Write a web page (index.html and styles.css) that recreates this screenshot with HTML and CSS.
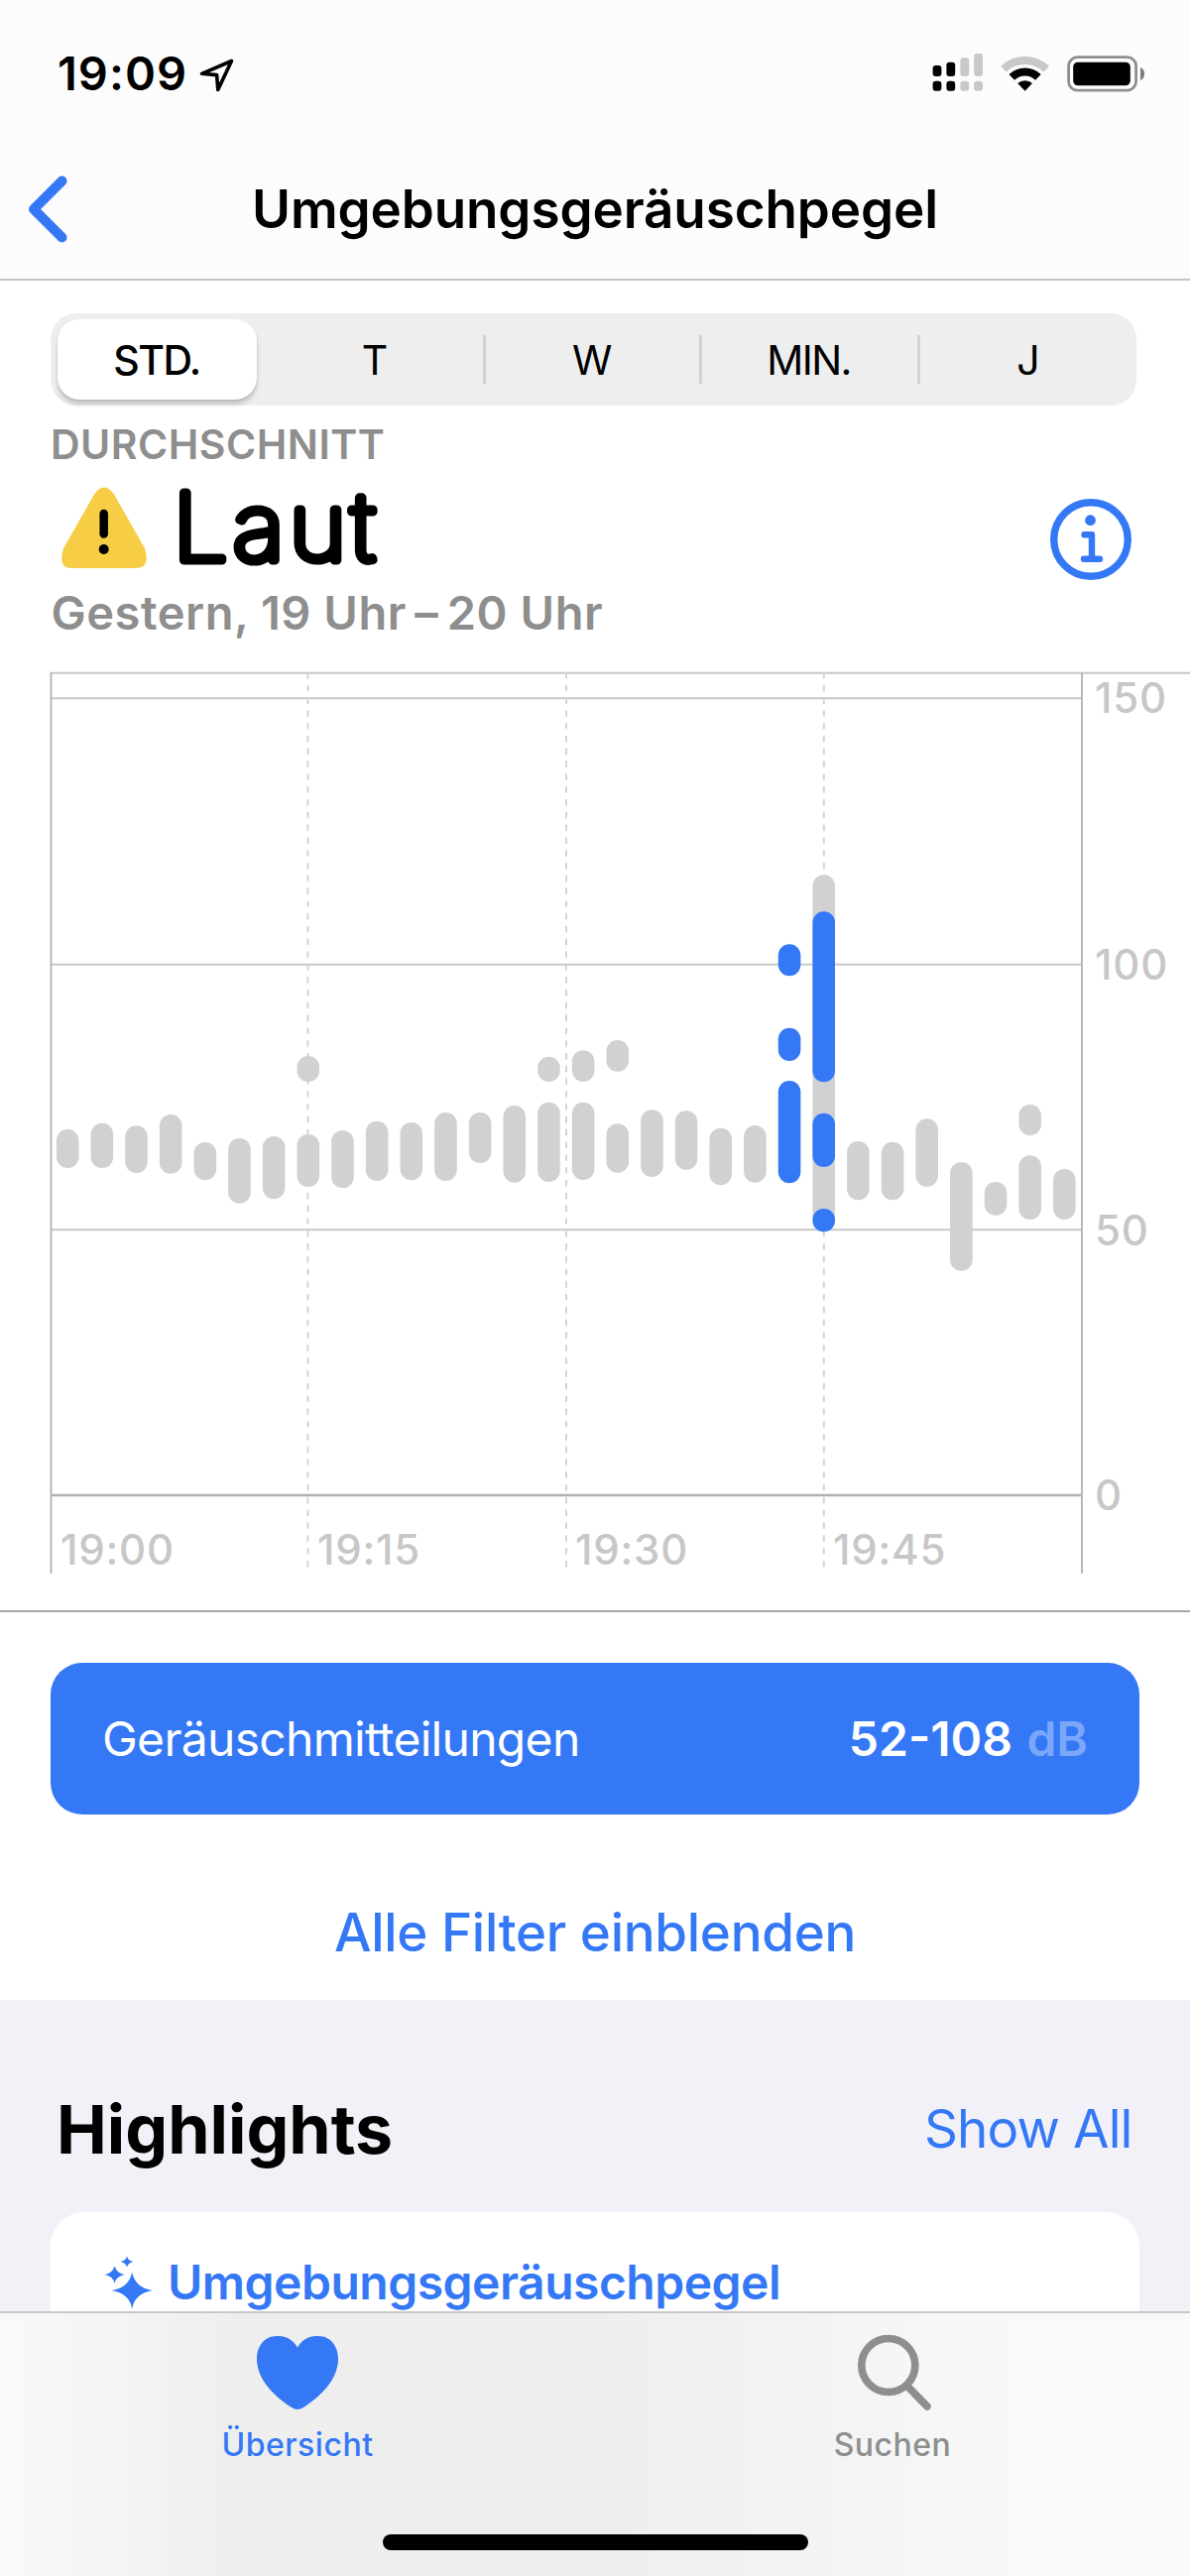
FILE: index.html
```html
<!DOCTYPE html>
<html lang="de">
<head>
<meta charset="utf-8">
<title>Umgebungsgeräuschpegel</title>
<link rel="stylesheet" href="styles.css">
</head>
<body>
<div class="screen">
  <header class="header">
    <div class="status">
      <div class="status-left">
        <span class="time">19:09</span>
        <svg class="location" width="38" height="38" viewBox="0 0 38 38"><path d="M33.5 4.5 3.5 17.3 18.6 18.6 19.8 33.5Z"/></svg>
      </div>
      <svg class="status-icons" width="220" height="44" viewBox="938 51 220 44">
        <g><rect x="940.6" y="65" width="8.8" height="11" rx="3"/><rect x="954.4" y="61.7" width="8.8" height="14.3" rx="3"/><rect x="940.6" y="80.7" width="8.8" height="10" rx="3"/><rect x="954.4" y="80.7" width="8.8" height="10" rx="3"/></g>
        <g class="dim"><rect x="968.4" y="57.3" width="8.8" height="18.7" rx="3"/><rect x="982.2" y="53" width="8.8" height="23" rx="3"/><rect x="968.4" y="80.7" width="8.8" height="10" rx="3"/><rect x="982.2" y="80.7" width="8.8" height="10" rx="3"/></g>
        <path class="arc dim-line" d="M1012 68.6A31.2 31.2 0 0 1 1055.2 68.6"/>
        <path class="arc" d="M1020.3 76.9A18.9 18.9 0 0 1 1046.9 76.9"/>
        <path d="M1033.6 90.7 1026.2 83.1A10.7 10.7 0 0 1 1041 83.1Z"/>
        <rect class="battery" x="1077.6" y="56.6" width="68" height="33.6" rx="9"/>
        <rect x="1082.2" y="61.7" width="57.6" height="23.6" rx="4.8"/>
        <path class="nub" d="M1150 67c5.4 2 5.400 11 0 13Z"/>
      </svg>
    </div>
    <div class="nav">
      <svg class="back" width="46" height="76" viewBox="0 0 46 76"><path d="M38.500 9.500 10 38 38.500 66.500"/></svg>
      <h1 class="title">Umgebungsgeräuschpegel</h1>
    </div>
  </header>

  <main class="content">
    <div class="segments">
      <div class="segment selected">STD.</div>
      <div class="segment">T</div>
      <div class="segment divided">W</div>
      <div class="segment divided">MIN.</div>
      <div class="segment divided">J</div>
    </div>

    <section class="summary">
      <div class="caption">DURCHSCHNITT</div>
      <div class="level">
        <svg class="warning" width="90" height="84" viewBox="0 0 90 84"><path class="tri" d="M35 8.500Q45 -5.500 55 8.500L86 63Q92 83 77 83H12Q-2 83 4 63Z"/><path class="mark" d="M44.700 28V48.500"/><circle cx="44.700" cy="64" r="5"/></svg>
        <svg class="level-name" width="230" height="116" viewBox="0 0 230 116"><text transform="translate(-5.500 92) scale(1.050 1)">Laut</text></svg>
        <svg class="info" width="82" height="82" viewBox="0 0 82 82"><circle class="ring" cx="41" cy="41" r="37.300"/><circle cx="40.500" cy="21.700" r="5.400"/><path class="stem" d="M34.500 36.200H42V60.500M34 60.700H50"/></svg>
      </div>
      <div class="range">Gestern, 19 Uhr&#8201;–&#8201;20 Uhr</div>
    </section>

    <svg class="chart" width="1200" height="912" viewBox="0 677 1200 912">
      <path class="grid" d="M51 678.700H1200M51 704.200H1091M51 972.700H1091M51 1240.300H1091"/>
      <path class="dash" d="M310.400 678V1583M571 678V1583M830.800 678V1583"/>
      <path class="zero" d="M51 1508H1091"/>
      <path class="side" d="M51.500 678V1587M1091 678V1587"/>
      <g id="bars"></g>
      <g class="axis">
        <text x="1104" y="719">150</text><text x="1104" y="987.500">100</text><text x="1104" y="1255.500">50</text><text x="1104" y="1523">0</text>
        <text x="61" y="1577.500">19:00</text><text x="320" y="1577.500">19:15</text><text x="580" y="1577.500">19:30</text><text x="840" y="1577.500">19:45</text>
      </g>
    </svg>

    <section class="filters">
      <div class="filter-card">
        <span class="filter-name">Geräuschmitteilungen</span>
        <span class="reading"><span>52-108</span><span class="unit">dB</span></span>
      </div>
      <div class="all-filters">Alle Filter einblenden</div>
    </section>

    <section class="highlights">
      <div class="section-head"><h2>Highlights</h2><span class="show-all">Show All</span></div>
      <div class="card">
        <svg class="sparkles" width="54" height="60" viewBox="102 2272 54 60"><path d="M133.200 2291.500Q136 2307 153.700 2310 136 2313 133.200 2328.500 130.400 2313 112.700 2310 130.400 2307 133.200 2291.500ZM115.600 2285Q117.200 2292.500 125.600 2294 117.200 2295.500 115.600 2303 114 2295.500 105.600 2294 114 2292.500 115.600 2285ZM128 2275.500Q129.200 2280 134.500 2281 129.200 2282 128 2286.500 126.800 2282 121.500 2281 126.800 2280 128 2275.500Z"/></svg>
        <span>Umgebungsgeräuschpegel</span>
      </div>
    </section>
  </main>

  <footer class="tabbar">
    <div class="tabs">
      <div class="tab active">
        <svg width="84" height="80" viewBox="0 0 84 80"><path d="M42 14.500C48 4 57 3 63 3 76 3 83 14 83 26 83 49 62 66 48 75Q42 79 36 75C22 66 1 49 1 26 1 14 8 3 21 3 27 3 36 4 42 14.500Z"/></svg>
        <span>Übersicht</span>
      </div>
      <div class="tab">
        <svg width="84" height="80" viewBox="858 2353 84 80"><circle class="lens" cx="895.800" cy="2385.500" r="27"/><path class="lens" d="M914.500 2406 935 2427"/></svg>
        <span>Suchen</span>
      </div>
    </div>
    <div class="home"></div>
  </footer>
</div>
<script src="chart.js"></script>
</body>
</html>
```

FILE: styles.css
```css
* { box-sizing: border-box; }
body { margin: 0; background: #fff; font-family: Inter, "Liberation Sans", sans-serif; color: #000; }
h1, h2 { margin: 0; font: inherit; }
svg { display: block; flex: none; }
span { white-space: nowrap; }
.screen { width: 1200px; height: 2598px; display: flex; flex-direction: column; overflow: hidden; }

.header { height: 283px; background: #fcfcfc; border-bottom: 2px solid #c6c6c6; }
.status { height: 147px; padding: 0 42px 0 58px; display: flex; align-items: center; justify-content: space-between; }
.status-left { display: flex; align-items: center; gap: 11px; }
.time { font-size: 47px; font-weight: 600; line-height: 60px; letter-spacing: 1px; }
.location { margin-top: 4px; }
.location path { fill: none; stroke: #000; stroke-width: 3.6; stroke-linejoin: round; }
.dim { fill: #c8c8ca; }
.arc { fill: none; stroke: #000; stroke-width: 8; }
.arc.dim-line { stroke: #c8c8ca; }
.battery { fill: none; stroke: #8e8e8e; stroke-width: 2.8; }
.nub { fill: #7c7c7c; }
.nav { height: 128px; padding-left: 24px; display: grid; grid-template-columns: 46px 1fr 70px; align-items: center; }
.back path { fill: none; stroke: #3478f6; stroke-width: 10; stroke-linecap: round; stroke-linejoin: round; }
.title { text-align: center; font-size: 53px; font-weight: 600; line-height: 80px; letter-spacing: -.12px; }

.content { height: 2048px; overflow: hidden; display: flex; flex-direction: column; }
.segments { margin: 33px 54px 0 51px; height: 93px; flex: none; padding: 6px 0; border-radius: 26px; background: #eee; display: grid; grid-template-columns: 218px 217.5px 218px 220px 1fr; align-items: center; font-size: 41px; letter-spacing: -1.5px; }
.segment { height: 49px; padding-right: 1px; display: flex; align-items: center; justify-content: center; }
.segment.selected { height: 81px; margin: 0 10px 0 7px; border-radius: 22px; background: #fff; font-weight: 500; box-shadow: 0 5px 4px rgba(0,0,0,.17), 0 1px 3px rgba(0,0,0,.08); }
.divided { border-left: 3px solid #d2d2d2; }

.summary { padding: 14px 59px 0 51px; flex: none; color: #8e8e8e; }
.caption { font-size: 41px; font-weight: 600; line-height: 50px; letter-spacing: .5px; }
.level { height: 116px; display: flex; align-items: center; }
.warning { margin-left: 9px; margin-top: 2px; }
.tri { fill: #f6cd45; }
.mark { stroke: #000; stroke-width: 8.5; stroke-linecap: round; }
.level-name { margin-left: 30px; overflow: visible; }
.level-name text { font-size: 93.500px; font-weight: 100; letter-spacing: 5px; fill: #000; stroke: #000; stroke-width: 9px; stroke-linejoin: round; }
.info { margin-left: auto; margin-top: 26px; fill: #3478f6; }
.ring, .stem { fill: none; stroke: #3478f6; stroke-width: 7.4; }
.stem { stroke-width: 6.4; stroke-linecap: round; stroke-linejoin: round; }
.range { padding-left: .5px; font-size: 47px; font-weight: 600; line-height: 57px; letter-spacing: .55px; }

.chart { margin-top: 31px; }
.grid { stroke: #c8c8c8; stroke-width: 2; }
.dash { stroke: #d4d4d4; stroke-width: 2; stroke-dasharray: 6.4 6.4; }
.zero { stroke: #b0b0b0; stroke-width: 2.4; }
.side { stroke: #b8b8b8; stroke-width: 2; }
.bar { fill: #d1d1d3; }
.bar.alert { fill: #3478f6; }
.axis { fill: #c7c7c9; font-size: 42px; font-weight: 500; letter-spacing: .8px; }

.filters { margin-top: 35px; border-top: 2px solid #a8a8a8; padding: 51px 51px 0; flex: none; height: 393px; }
.filter-card { height: 153px; border-radius: 32px; padding: 0 52px 0 52px; background: #3478f6; color: #fff; display: flex; align-items: center; justify-content: space-between; font-size: 48px; }
.filter-name { letter-spacing: -.7px; }
.reading { display: flex; gap: 14.500px; font-weight: 600; }
.unit { color: #7aa7f9; }
.all-filters { padding-top: 51px; text-align: center; font-size: 53px; font-weight: 500; line-height: 136px; letter-spacing: -.3px; color: #3478f6; }

.highlights { flex: 1; background: #f2f1f7; padding: 45px 51px 0; }
.section-head { height: 169px; padding: 0 7.500px 0 6px; display: flex; align-items: center; justify-content: space-between; }
h2 { font-size: 68px; font-weight: 700; }
.show-all { font-size: 53px; letter-spacing: -.9px; color: #3478f6; }
.card { height: 141px; border-radius: 34px 34px 0 0; background: #fff; padding-left: 51px; display: flex; align-items: center; gap: 13px; font-size: 48px; font-weight: 600; letter-spacing: -.5px; color: #3478f6; }
.sparkles { fill: #3478f6; }

.tabbar { height: 267px; border-top: 2px solid #c8c8ca; background: linear-gradient(90deg, #f8fafa 0%, #f3f4f4 10%, #eee 20%, #eee 50%, #f3f3f3 68%, #f7f8f8 82%, #f8faf9 100%); display: flex; flex-direction: column; align-items: center; }
.tabs { width: 1200px; height: 223px; display: grid; grid-template-columns: 1fr 1fr; }
.tab { padding-top: 20px; display: flex; flex-direction: column; align-items: center; font-size: 32px; font-weight: 500; line-height: 65px; letter-spacing: .5px; color: #8e8e8e; }
.tab.active { color: #3478f6; fill: #3478f6; }
.lens { fill: none; stroke: #8e8e8e; stroke-width: 7.6; stroke-linecap: round; }
.home { width: 429px; height: 16px; border-radius: 8px; background: #000; }
```

FILE: chart.js
```js
// Column index, top and bottom of every range drawn in the chart.
const ranges = [
  [0,1139,1178],[1,1132.7,1178],[2,1135.3,1183],[3,1124,1183.7],[4,1152,1190.3],[5,1148,1213.7],[6,1146,1209.3],
  [7,1144,1197],[7,1065,1091],[8,1140,1198.3],[9,1130.7,1191],[10,1132,1190.3],[11,1122,1191],[12,1122,1173],
  [13,1115,1192.7],[14,1111.7,1192],[14,1065.7,1091],[15,1111.7,1190],[15,1059.3,1091],[16,1049,1080.7],
  [16,1133.3,1182.7],[17,1119.3,1187],[18,1120.3,1179.7],[19,1137.7,1195.3],[20,1135,1192.7],
  [21,952.3,984.3,1],[21,1036.7,1070,1],[21,1090,1193.3,1],[22,882.3,1242],[22,919.3,1091.3,1],
  [22,1122.7,1177,1],[22,1219,1242.3,1],[23,1151,1210.3],[24,1151.7,1210.3],[25,1128.3,1196.7],
  [26,1172,1281.7],[27,1192,1225.7],[28,1114,1145],[28,1165.3,1230],[29,1179,1230]
];
const bars = document.getElementById("bars");
for (const [column, top, bottom, alert] of ranges) {
  const bar = document.createElementNS("http://www.w3.org/2000/svg", "rect");
  bar.setAttribute("class", alert ? "bar alert" : "bar");
  bar.setAttribute("x", 68.2 + column * 34.66 - 11.3);
  bar.setAttribute("y", top);
  bar.setAttribute("width", 22.6);
  bar.setAttribute("height", bottom - top);
  bar.setAttribute("rx", 11.3);
  bars.append(bar);
}
```
